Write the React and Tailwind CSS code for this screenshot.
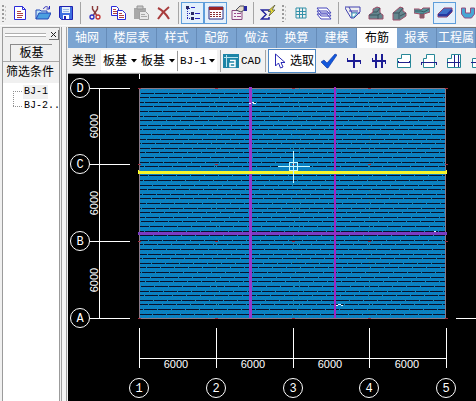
import React from 'react'

const tabs = [
  { name: '轴网', width: 'w-[39px]' },
  { name: '楼层表', width: 'w-[50px]' },
  { name: '样式', width: 'w-[40px]' },
  { name: '配筋', width: 'w-[40px]' },
  { name: '做法', width: 'w-[40px]' },
  { name: '换算', width: 'w-[40px]' },
  { name: '建模', width: 'w-[40px]' },
  { name: '布筋', width: 'w-[40px]', active: true },
  { name: '报表', width: 'w-[40px]' },
  { name: '工程属', width: 'w-[39px]' },
]

const rows = [
  { name: 'D', y: 14 },
  { name: 'C', y: 90 },
  { name: 'B', y: 167 },
  { name: 'A', y: 244 },
]

const cols = [
  { name: '1', x: 71 },
  { name: '2', x: 148 },
  { name: '3', x: 225 },
  { name: '4', x: 301 },
  { name: '5', x: 378 },
]

const hatch = Array.from({ length: 49 }, (_, i) => 19 + Math.floor(i * 4.605))

function Icon({ children }) {
  return (
    <svg width="16" height="16" viewBox="0 0 16 16" fill="none" className="shrink-0" aria-hidden="true">
      {children}
    </svg>
  )
}

function ToolButton({ label, active, children }) {
  return (
    <button
      aria-label={label}
      className={
        active
          ? 'flex h-[22px] w-[23px] shrink-0 items-center justify-center border border-[#5e9edb] bg-[#e3f0fb]'
          : 'flex h-[22px] w-[23px] shrink-0 items-center justify-center'
      }
    >
      {children}
    </button>
  )
}

function Separator() {
  return (
    <div className="flex w-[6px] shrink-0 justify-center">
      <div className="h-[22px] w-px bg-[#a5a5a5]" />
    </div>
  )
}

function Grip({ width }) {
  return (
    <div className={`flex shrink-0 justify-center ${width}`}>
      <svg width="4" height="18" shapeRendering="crispEdges" aria-hidden="true">
        <path d="M1 1v17" stroke="#9a9a9a" strokeWidth="2" strokeDasharray="2 2" />
        <path d="M3 2v16" stroke="#c8c8c8" strokeWidth="1" strokeDasharray="2 2" />
      </svg>
    </div>
  )
}

function MainToolbar() {
  return (
    <div className="flex h-[26px] shrink-0 items-center overflow-hidden border-b border-[#fafafa]">
      <Grip width="w-[8px]" />
      <ToolButton label="新建">
        <Icon>
          <path d="M2.500 1.500h8l3 3v10h-11z" fill="#fff" stroke="#2b2bd8" />
          <path d="M10.500 1.500v3h3" stroke="#2b2bd8" />
          <path d="M5 6.500h4M5 8.500h6M5 10.500h6M5 12.500h5" stroke="#b04040" />
        </Icon>
      </ToolButton>
      <ToolButton label="打开">
        <Icon>
          <path d="M1 14V5h4l1 1h6v3" fill="#bfe4f6" stroke="#2346b8" />
          <path d="M1 14l3-6h12l-3 6z" fill="#4b9fe0" stroke="#2346b8" />
          <path d="M8.500 4c1-3 4-3 5.500-.5M14.500 1v3h-3" stroke="#2b2bb8" />
        </Icon>
      </ToolButton>
      <ToolButton label="保存">
        <Icon>
          <path d="M1.500 1.500h13v13h-11l-2-2z" fill="#3f6fe0" stroke="#1f22b0" />
          <path d="M4 2h8v6H4z" fill="#e6f2fb" />
          <path d="M5 10h6v4H5z" fill="#fff" />
          <path d="M6 11h2v3H6z" fill="#1f22b0" />
          <path d="M5 4.500h6M5 6.500h6" stroke="#9dbbe6" />
        </Icon>
      </ToolButton>
      <Separator />
      <ToolButton label="剪切">
        <Icon>
          <path d="M5.500 1v3l4 6M10.500 1v3l-4 6" stroke="#8a3a3a" strokeWidth="1.400" />
          <circle cx="5" cy="12" r="2" stroke="#2b2bc0" strokeWidth="1.300" />
          <circle cx="11" cy="12" r="2" stroke="#c03030" strokeWidth="1.300" />
        </Icon>
      </ToolButton>
      <ToolButton label="复制">
        <Icon>
          <path d="M1.500 1.500h5l2 2v7h-7z" fill="#fff" stroke="#2b2bd8" />
          <path d="M3 4.500h3M3 6.500h4M3 8.500h4" stroke="#b04040" />
          <path d="M7.500 5.500h5l3 3v6h-8z" fill="#fff" stroke="#2b2bd8" />
          <path d="M9 8.500h3M9 10.500h5M9 12.500h5" stroke="#b04040" />
        </Icon>
      </ToolButton>
      <ToolButton label="粘贴">
        <Icon>
          <path d="M1 3h12v11H1z" fill="#a8a8a8" />
          <path d="M4 1h6v3H4z" fill="#c8c8c8" stroke="#969696" />
          <path d="M6.500 6.500h6l3 3v5h-9z" fill="#e8e8e8" stroke="#a0a0a0" />
          <path d="M8 9.500h4M8 11.500h6" stroke="#a8a8a8" />
        </Icon>
      </ToolButton>
      <ToolButton label="删除">
        <Icon>
          <path d="M2 3c4 2 8 6 11 11M13 2C9 5 5 9 2 14" stroke="#a83c3c" strokeWidth="2" />
        </Icon>
      </ToolButton>
      <Separator />
      <ToolButton label="树形" active>
        <Icon>
          <path d="M2.500 2v12M2 3.500h4M2 8.500h4M2 13.500h4" stroke="#2626b0" strokeDasharray="1 1" />
          <path d="M1 1h3v3H1zM6 7h3v3H6zM6 12h3v3H6z" fill="#2a2a66" />
          <path d="M6 2.500h4M10 8.500h5M10 13.500h5" stroke="#2626c0" />
        </Icon>
      </ToolButton>
      <ToolButton label="表格" active>
        <Icon>
          <path d="M1 2h14v12H1z" fill="#fff" stroke="#2a2a80" />
          <path d="M1 2h14v3H1z" fill="#9c2424" />
          <path d="M2 7.500h12M2 9.500h12M2 11.500h12" stroke="#8c3030" strokeDasharray="2 1" />
        </Icon>
      </ToolButton>
      <ToolButton label="属性">
        <Icon>
          <path d="M1 5.500h10v9H1z" fill="#f5eff5" stroke="#8a4a80" />
          <path d="M3 8.500h2M6 8.500h4M3 11.500h2M6 11.500h4" stroke="#9a4a8a" />
          <path d="M5 5l4-4h4v4l-3 2z" fill="#e6dccb" stroke="#505060" />
          <path d="M13 1h3v5h-3z" fill="#2b2ba0" />
        </Icon>
      </ToolButton>
      <Separator />
      <ToolButton label="汇总计算">
        <Icon>
          <path d="M9 7V5H1.500L6 9.500 1.500 14H9v-2" stroke="#23239c" strokeWidth="1.500" />
          <path d="M15 0L8 6h3l-2 5 6-6h-3z" fill="#f2e63a" stroke="#4a4a30" strokeWidth=".7" />
        </Icon>
      </ToolButton>
      <Grip width="w-[10px]" />
      <ToolButton label="网格">
        <Icon>
          <path d="M3 3h10v10H3zM6.500 3v10M9.500 3v10M3 6.500h10M3 9.500h10" stroke="#3290a8" />
        </Icon>
      </ToolButton>
      <ToolButton label="楼层">
        <Icon>
          <path d="M1 9l10 0 4 5H5zM1 6h10l4 5H5zM1 3h10l4 5H5z" fill="#fff" stroke="#4646bc" />
        </Icon>
      </ToolButton>
      <Separator />
      <ToolButton label="三维">
        <Icon>
          <path d="M0 2h15v5L9 13H6L0 3zM4 2l3 6h8M7 8v5M4 6h9" stroke="#4040b0" />
          <path d="M7 8h5l-3 4H7z" fill="#fff" stroke="#40a0b8" />
        </Icon>
      </ToolButton>
      <ToolButton label="独立基础">
        <Icon>
          <path d="M1 10l4-3V4l4-2 3 1v5l3 2v4H1z" fill="#65868e" stroke="#a04d68" />
          <path d="M5 7h4l3-4M1 10h9l3-2M10 10v4" stroke="#3b555e" />
        </Icon>
      </ToolButton>
      <ToolButton label="桩承台">
        <Icon>
          <path d="M2 8l7-6 3 1v3l3 2v3l-6 4H2z" fill="#65868e" stroke="#a04d68" />
          <path d="M2 8h6l4-5M8 8v6M9 11l6-3" stroke="#3b555e" />
        </Icon>
      </ToolButton>
      <ToolButton label="基础梁">
        <Icon>
          <path d="M0 4h5l2 1 2-2h7v4l-6 2v4H6V9L0 8z" fill="#56949b" stroke="#a04d68" />
          <path d="M1 6h6l3 1 5-3M6 9h4" stroke="#365b64" />
          <path d="M6 9h4v4H6z" fill="#8a5a68" />
        </Icon>
      </ToolButton>
      <ToolButton label="筏板" active>
        <Icon>
          <path d="M1 9l6-6h8v4l-5 5H1z" fill="#3f70c8" stroke="#963f68" />
          <path d="M1 10h9l5-5" stroke="#2638a0" strokeWidth="2" />
        </Icon>
      </ToolButton>
      <ToolButton label="集水坑">
        <Icon>
          <path d="M1.500 3h4v5h5V3h4v6l-3 4h-7l-3-4z" fill="#46a7d4" stroke="#924f83" />
        </Icon>
      </ToolButton>
    </div>
  )
}

function SidePanel() {
  return (
    <aside className="flex w-[58px] shrink-0 flex-col border-x border-t border-[#9b9b9b]">
      <div className="flex h-[14px] shrink-0 items-center gap-[3px] pl-[2px]">
        <div className="h-[4px] flex-1 border-y border-[#b0b0b0] bg-white" />
        <button aria-label="关闭" className="flex size-[10px] items-center justify-center border-r border-b border-[#777]">
          <svg width="7" height="7" aria-hidden="true">
            <path d="M1 1l5 5M6 1L1 6" stroke="#222" />
          </svg>
        </button>
      </div>
      <div className="flex h-[20px] shrink-0 border-b border-[#a8a8a8] px-[7px] pt-[2px]">
        <button className="flex-1 border-t border-l border-[#8a8a8a] text-[12px] leading-[17px]">板基</button>
      </div>
      <h2 className="h-[21px] shrink-0 pl-[3px] text-[12px] leading-[21px] whitespace-nowrap">筛选条件</h2>
      <div className="flex flex-1 bg-white pt-[2px] pl-[10px]">
        <svg width="10" height="24" className="shrink-0" shapeRendering="crispEdges" aria-hidden="true">
          <path d="M0 6.500h10M.5 6v16M0 21.500h10" stroke="#909090" strokeDasharray="1 1" />
        </svg>
        <ul className="font-['Liberation_Mono',monospace] text-[10px] leading-[14px] whitespace-nowrap">
          <li><button className="bg-[#f0f0f0] pl-px">BJ-1</button></li>
          <li><button className="pl-px">BJ-2..</button></li>
        </ul>
      </div>
    </aside>
  )
}

function Combo({ label, value, width, mono }) {
  return (
    <label className={`flex h-[22px] shrink-0 items-center bg-white pl-[2px] ${width}`}>
      <select
        aria-label={label}
        className={
          mono
            ? "min-w-0 flex-1 appearance-none bg-white font-['Liberation_Mono',monospace] text-[11px]"
            : 'min-w-0 flex-1 appearance-none bg-white text-[12px]'
        }
      >
        <option>{value}</option>
      </select>
      <svg width="9" height="4" className="pointer-events-none shrink-0" aria-hidden="true">
        <path d="M1 0h6L4 3.500z" fill="#000" />
      </svg>
    </label>
  )
}

function EditButton({ label, children }) {
  return (
    <button aria-label={label} className="flex h-[22px] w-[25px] shrink-0 items-center justify-center">
      {children}
    </button>
  )
}

function EditToolbar() {
  return (
    <div className="flex h-[26px] shrink-0 items-center overflow-hidden border-b border-[#999] bg-[#f2f2f2] pl-[4px]">
      <span className="w-[29px] shrink-0 text-[12px]">类型</span>
      <Combo label="类型" value="板基" width="w-[38px]" />
      <Combo label="构件" value="板基" width="w-[38px]" />
      <div className="h-[20px] w-px shrink-0 bg-[#999]" />
      <Combo label="编号" value="BJ-1" width="w-[39px]" mono />
      <Separator />
      <button className="flex w-[39px] shrink-0 items-center gap-[2px] font-['Liberation_Mono',monospace] text-[11px]">
        <Icon>
          <path d="M0 1h16v14H0z" fill="#1c84a6" />
          <path d="M1 4.500h14M3.500 2v12" stroke="#b9e3ee" />
          <path d="M7 7.500h5v6H7v-3h5" stroke="#fff" strokeWidth="1.500" />
        </Icon>
        CAD
      </button>
      <Separator />
      <button className="flex h-[24px] w-[48px] shrink-0 items-center gap-px border border-[#4d88c4] bg-white pl-[4px] text-[12px]">
        <Icon>
          <path d="M2.500 1v12l3-3 2 5 2.500-1-2-4.500h4z" fill="#fff" stroke="#2929b4" />
        </Icon>
        选取
      </button>
      <EditButton label="确认">
        <Icon>
          <path d="M0 9l3-2 3 3 8-9 2 1-9 13H6z" fill="#1258dc" stroke="#0a2f9c" strokeWidth=".6" />
        </Icon>
      </EditButton>
      <EditButton label="单板布置">
        <Icon>
          <path d="M8 1v14M1 8h14" stroke="#1c1c94" strokeWidth="2" />
          <path d="M1.500 5v3M14.500 8v3" stroke="#1c1c94" />
        </Icon>
      </EditButton>
      <EditButton label="多板布置">
        <Icon>
          <path d="M5 1v14M11 1v14M1 8h14" stroke="#1c1c94" strokeWidth="2" />
          <path d="M1.500 5v3M14.500 8v3" stroke="#1c1c94" />
        </Icon>
      </EditButton>
      <EditButton label="底筋">
        <Icon>
          <path d="M1.500 14.500v-9h4v-4h9v13z" fill="#fff" stroke="#288898" />
          <path d="M2 9.500h12M2.500 8v2M13.500 8v2" stroke="#20208c" />
        </Icon>
      </EditButton>
      <EditButton label="面筋">
        <Icon>
          <path d="M2.500 14.500v-9h3v-4h8v13z" fill="#fff" stroke="#288898" />
          <path d="M0 9.500h16M.5 9v3M15.500 9v3" stroke="#20208c" />
        </Icon>
      </EditButton>
      <EditButton label="双向筋">
        <Icon>
          <path d="M1.500 14.500v-9h4v-4h9v13z" fill="#fff" stroke="#288898" />
          <path d="M1 9.500h13M8.500 2v12M12.500 2v12" stroke="#20208c" />
        </Icon>
      </EditButton>
      <EditButton label="负筋">
        <Icon>
          <path d="M1.500 14.500v-9h4v-4h9v13z" fill="#fff" stroke="#288898" />
          <path d="M0 9.500h15" stroke="#20208c" />
        </Icon>
      </EditButton>
    </div>
  )
}

function AxisBubble({ x, y, name }) {
  return (
    <g>
      <circle cx={x} cy={y} r="9.500" fill="none" stroke="#fff" />
      <text x={x} y={y + 4} textAnchor="middle" fill="#fff" className="font-['Liberation_Mono',monospace] text-[12px]">{name}</text>
    </g>
  )
}

function Drawing() {
  return (
    <svg className="block min-h-[327px] w-full flex-1 bg-black" role="img" aria-label="板基布筋平面图">
      <defs>
        <pattern id="slab" width="4" height="4" patternUnits="userSpaceOnUse">
          <rect width="4" height="4" fill="#0782c6" />
          <path d="M0 0h1v1H0zM2 1h1v1H2zM1 3h1v1H1z" fill="#1c7ca8" />
        </pattern>
      </defs>

      <g shapeRendering="crispEdges">
        <rect x="71" y="14" width="307" height="231" fill="url(#slab)" />
        {hatch.map((y, i) => (
          <g key={y}>
            <path d={`M72 ${y}.5h305`} stroke="#06122e" />
            <path d={`M72 ${y}.5h305`} stroke="#158cb8" strokeDasharray="1 13" strokeDashoffset={(i * 5) % 14} />
          </g>
        ))}
        <path d="M71.500 14v231M377.500 14v231M71 14.500h307M71 244.500h307" stroke="#8a7a88" />
        <path d="M148.500 14v230M225.500 14v230M231.500 14v230M301.500 14v230" stroke="#288ca0" strokeDasharray="1 5" />
        {rows.map((row) => cols.map((col) => (
          <path key={row.name + col.name} d={`M${col.x - 1} ${row.y}.5h3`} stroke="#a02c3c" />
        )))}

        {/* rebar */}
        <path d="M70 159.500h309" stroke="#7a3cc4" strokeWidth="3" />
        <path d="M182 13v231" stroke="#9838cc" strokeWidth="3" />
        <path d="M267 13v231" stroke="#a024c4" strokeWidth="2" />
        <path d="M70 98.500h309" stroke="#f6f62a" strokeWidth="3" />
        <path d="M70.500 96v4M378.500 96v4" stroke="#ffff30" />
        <path d="M181 29.500h2M184 28.500h2M185 29.500h3M268 231.500h2M270 230.500h3M273 231.500h2M366 157.500h2" stroke="#e6f8ff" />

        {/* cursor */}
        <path d="M210 92.500h32M225.500 77v32M221.500 88.500h8v8h-8z" stroke="#c8f8ff" fill="none" />

        {/* axis lines */}
        <path d="M71.500 0v5M388 244.500H4000M31.500 14v231M71 284.500h308" stroke="#fff" />
        {rows.map((row) => <path key={row.name} d={`M22 ${row.y}.5h40`} stroke="#fff" />)}
        {cols.map((col) => <path key={col.name} d={`M${col.x}.5 254v40`} stroke="#fff" />)}
      </g>

      {rows.map((row) => <AxisBubble key={row.name} x={12} y={row.y} name={row.name} />)}
      {cols.map((col) => <AxisBubble key={col.name} x={col.x} y={314} name={col.name} />)}
      <g fill="#fff" textAnchor="middle" className="font-['Liberation_Sans',sans-serif] text-[11px]">
        {[108, 185, 262, 339].map((x) => <text key={x} x={x} y="294">6000</text>)}
        {[52, 129, 206].map((y) => <text key={y} x="30" y={y} transform={`rotate(-90 30 ${y})`}>6000</text>)}
      </g>
    </svg>
  )
}

export default function App() {
  return (
    <div className="flex min-h-screen flex-col overflow-hidden bg-[#f0f0f0] font-['Liberation_Sans','Noto_Sans_CJK_SC',sans-serif] text-[12px] leading-4 text-black">
      <MainToolbar />
      <div className="flex flex-1 pt-px pl-[2px]">
        <SidePanel />
        <div className="mx-px w-[6px] shrink-0 border-x border-[#a0a0a0] bg-[#f4f4f4]" />
        <main className="flex min-w-0 flex-1 flex-col border-t border-[#777]">
          <div role="tablist" className="flex h-[20px] shrink-0 overflow-hidden bg-[#7ba4d1]">
            {tabs.map((tab) => (
              <button
                key={tab.name}
                role="tab"
                aria-selected={!!tab.active}
                className={
                  tab.active
                    ? `${tab.width} shrink-0 bg-white text-center whitespace-nowrap`
                    : `${tab.width} shrink-0 border-r border-[#668cb8] text-center whitespace-nowrap text-white`
                }
              >
                {tab.name}
              </button>
            ))}
          </div>
          <EditToolbar />
          <Drawing />
        </main>
      </div>
    </div>
  )
}
